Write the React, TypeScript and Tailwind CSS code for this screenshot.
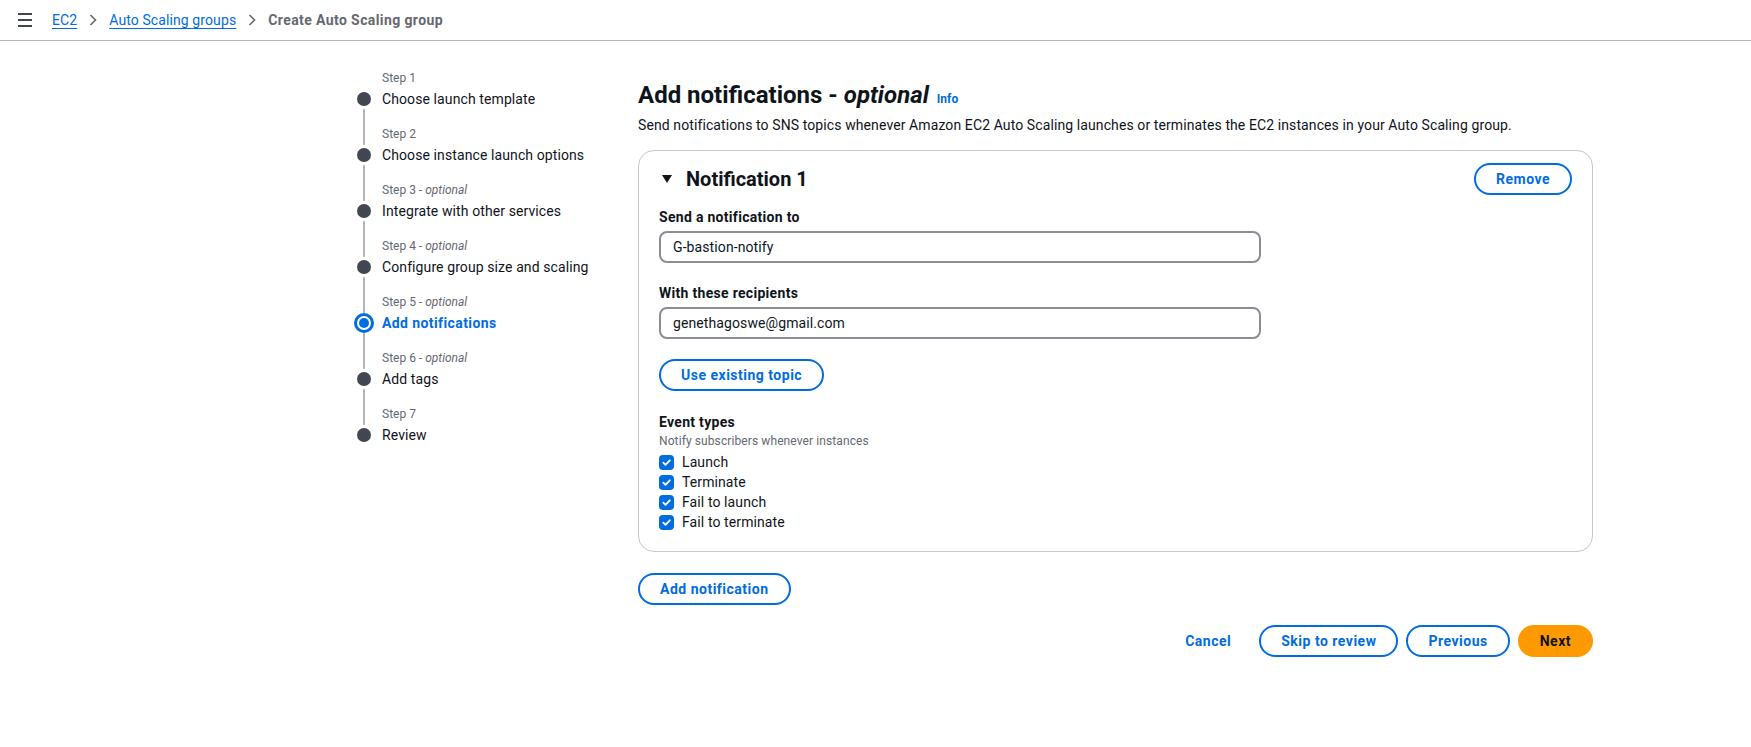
import React from "react";

const STEPS = [
  { label: "Step 1", optional: false, title: "Choose launch template" },
  { label: "Step 2", optional: false, title: "Choose instance launch options" },
  { label: "Step 3", optional: true, title: "Integrate with other services" },
  { label: "Step 4", optional: true, title: "Configure group size and scaling" },
  { label: "Step 5", optional: true, title: "Add notifications" },
  { label: "Step 6", optional: true, title: "Add tags" },
  { label: "Step 7", optional: false, title: "Review" },
];

const ACTIVE = 4;

const EVENTS = ["Launch", "Terminate", "Fail to launch", "Fail to terminate"];

function Chevron() {
  return (
    <svg width="16" height="16" viewBox="0 0 16 16" className="shrink-0">
      <path d="M5.5 3l5 5-5 5" fill="none" stroke="#656871" strokeWidth="1.6" />
    </svg>
  );
}

function OutlineButton({ children }: { children: React.ReactNode }) {
  return (
    <button
      type="button"
      className="h-[32px] px-[20px] rounded-full border-2 border-[#006ce0] text-[#006ce0] text-[14px] font-bold tracking-[0.5px] leading-[22px] bg-white"
    >
      {children}
    </button>
  );
}

function StepNav() {
  return (
    <nav className="w-[284px] shrink-0">
      {STEPS.map((step, i) => {
        const active = i === ACTIVE;
        return (
          <div key={step.label} className="flex h-[56px] gap-[8px]">
            <div className="w-[20px] flex flex-col items-center">
              <div className={`w-[2px] h-[21px] ${i === 0 ? "" : "bg-[#b4b4bb]"}`} />
              <div className="h-[20px] w-[20px] flex items-center justify-center">
                {active ? (
                  <div className="w-[20px] h-[20px] rounded-full border-[3px] border-[#006ce0] flex items-center justify-center">
                    <div className="w-[10px] h-[10px] rounded-full bg-[#006ce0]" />
                  </div>
                ) : (
                  <div className="w-[14px] h-[14px] rounded-full bg-[#424650]" />
                )}
              </div>
              <div className={`w-[2px] flex-1 ${i === STEPS.length - 1 ? "" : "bg-[#b4b4bb]"}`} />
            </div>
            <div className="flex flex-col">
              <span className="text-[12px] leading-[20px] text-[#656871]">
                {step.label}
                {step.optional && (
                  <>
                    {" - "}
                    <i>optional</i>
                  </>
                )}
              </span>
              <span
                className={`text-[14px] leading-[22px] ${
                  active ? "font-bold tracking-[0.4px] text-[#006ce0]" : "tracking-[0.1px] text-[#0f141a]"
                }`}
              >
                {step.title}
              </span>
            </div>
          </div>
        );
      })}
    </nav>
  );
}

function Checkbox({ label }: { label: string }) {
  return (
    <label className="flex items-center h-[20px] gap-[8px]">
      <span className="w-[15px] h-[15px] rounded-[4px] bg-[#006ce0] flex items-center justify-center">
        <svg width="11" height="11" viewBox="0 0 12 12">
          <path d="M2.5 6.2l2.4 2.4L9.6 3.6" fill="none" stroke="white" strokeWidth="2" strokeLinecap="round" strokeLinejoin="round" />
        </svg>
      </span>
      <span className="text-[14px] tracking-[0.1px] text-[#0f141a]">{label}</span>
    </label>
  );
}

export default function App() {
  return (
    <div className="min-h-screen bg-white font-[Roboto,sans-serif] text-[#0f141a]">
      <header className="h-[41px] border-b border-[#b4b4bb] flex items-center pl-[18px] gap-[20px]">
        <svg width="14" height="14" viewBox="0 0 14 14">
          <path d="M0 1h14M0 7h14M0 13h14" stroke="#424650" strokeWidth="2" />
        </svg>
        <div className="flex items-center gap-[8px] text-[14px] tracking-[0.1px]">
          <a className="text-[#006ce0] underline underline-offset-[3px]">EC2</a>
          <Chevron />
          <a className="text-[#006ce0] underline underline-offset-[3px]">Auto Scaling groups</a>
          <Chevron />
          <span className="font-bold tracking-[0.4px] text-[#656871]">Create Auto Scaling group</span>
        </div>
      </header>

      <div className="flex pl-[354px] pt-[27px]">
        <StepNav />

        <main className="w-[955px] pt-[12px]">
          <h1 className="text-[24px] leading-[30px] font-bold text-[#0f141a]">
            Add notifications - <i>optional</i>
            <span className="ml-[8px] text-[12px] font-bold text-[#006ce0]">Info</span>
          </h1>
          <p className="text-[14px] leading-[20px] mt-[1px] tracking-[0.1px]">
            Send notifications to SNS topics whenever Amazon EC2 Auto Scaling launches or terminates the EC2 instances in your Auto Scaling group.
          </p>

          <section className="mt-[15px] border border-[#c6c6cd] rounded-[16px] px-[20px] pt-[12px] pb-[19px]">
            <div className="flex items-center justify-between">
              <div className="flex items-center gap-[14px] pl-[3px]">
                <svg width="10" height="8" viewBox="0 0 10 8">
                  <path d="M0 0h10L5 8z" fill="#0f141a" />
                </svg>
                <h2 className="text-[20px] font-bold leading-[26px]">Notification 1</h2>
              </div>
              <OutlineButton>Remove</OutlineButton>
            </div>

            <div className="mt-[12px] text-[14px] font-bold tracking-[0.3px] leading-[20px]">Send a notification to</div>
            <input
              readOnly
              value="G-bastion-notify"
              className="mt-[4px] block w-[602px] h-[32px] rounded-[8px] border-2 border-[#8c8c94] px-[12px] text-[14px] tracking-[0.1px] outline-none"
            />

            <div className="mt-[20px] text-[14px] font-bold tracking-[0.3px] leading-[20px]">With these recipients</div>
            <input
              readOnly
              value="genethagoswe@gmail.com"
              className="mt-[4px] block w-[602px] h-[32px] rounded-[8px] border-2 border-[#8c8c94] px-[12px] text-[14px] tracking-[0.1px] outline-none"
            />

            <div className="mt-[20px]">
              <OutlineButton>Use existing topic</OutlineButton>
            </div>

            <div className="mt-[20px] text-[14px] font-bold tracking-[0.3px] leading-[22px]">Event types</div>
            <div className="text-[12px] leading-[16px] tracking-[0.1px] text-[#656871]">Notify subscribers whenever instances</div>
            <div className="mt-[3px] flex flex-col">
              {EVENTS.map((e) => (
                <Checkbox key={e} label={e} />
              ))}
            </div>
          </section>

          <div className="mt-[21px]">
            <OutlineButton>Add notification</OutlineButton>
          </div>

          <div className="mt-[20px] flex justify-end items-center gap-[8px]">
            <button type="button" className="h-[32px] px-[20px] text-[14px] font-bold tracking-[0.5px] text-[#006ce0]">
              Cancel
            </button>
            <OutlineButton>Skip to review</OutlineButton>
            <OutlineButton>Previous</OutlineButton>
            <button
              type="button"
              className="h-[32px] px-[22px] rounded-full bg-[#ff9900] text-[14px] font-bold tracking-[0.5px] text-[#0f141a]"
            >
              Next
            </button>
          </div>
        </main>
      </div>
    </div>
  );
}
